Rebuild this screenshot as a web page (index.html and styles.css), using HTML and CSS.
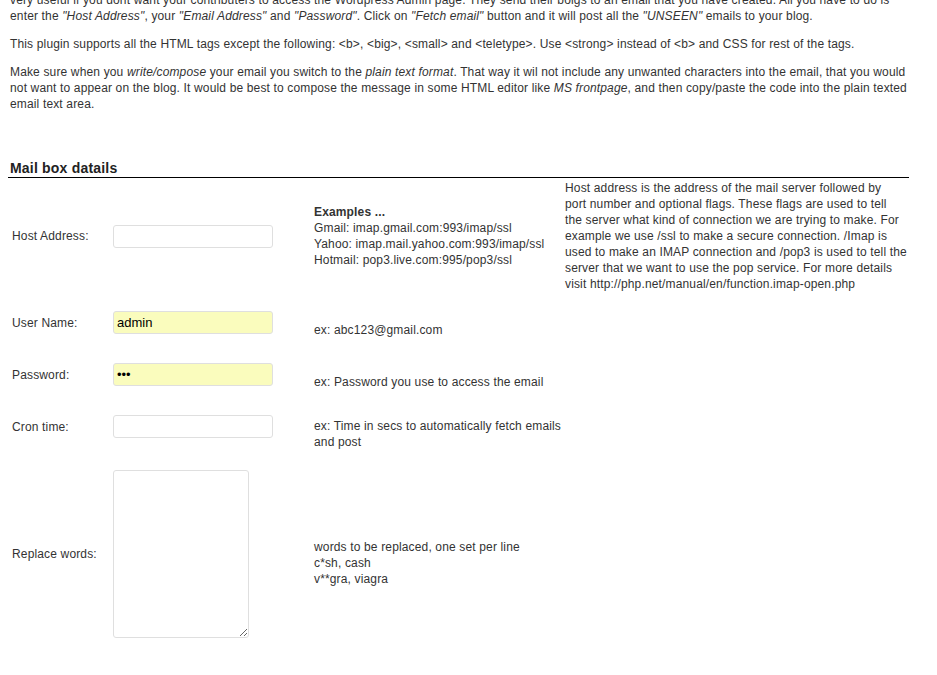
FILE: index.html
```html
<!DOCTYPE html>
<html>
<head>
<meta charset="utf-8">
<link rel="stylesheet" href="styles.css">
</head>
<body>
<div class="wrap">
  <div class="intro">
    <p class="first">very useful if you dont want your contributers to access the Wordpress Admin page. They send their bolgs to an email that you have created. All you have to do is enter the <em>"Host Address"</em>, your <em>"Email Address"</em> and <em>"Password"</em>. Click on <em>"Fetch email"</em> button and it will post all the <em>"UNSEEN"</em> emails to your blog.</p>
  </div>
  <p>This plugin supports all the HTML tags except the following: &lt;b&gt;, &lt;big&gt;, &lt;small&gt; and &lt;teletype&gt;. Use &lt;strong&gt; instead of &lt;b&gt; and CSS for rest of the tags.</p>
  <p>Make sure when you <em>write/compose</em> your email you switch to the <em>plain text format</em>. That way it wil not include any unwanted characters into the email, that you would not want to appear on the blog. It would be best to compose the message in some HTML editor like <em>MS frontpage</em>, and then copy/paste the code into the plain texted email text area.</p>

  <h3 class="section-title">Mail box datails</h3>

  <table class="form">
    <colgroup>
      <col class="c1"><col class="c2"><col class="c3"><col class="c4">
    </colgroup>
    <tr class="row-host">
      <td class="lbl">Host Address:</td>
      <td class="inp"><input type="text" class="field"></td>
      <td class="ex"><strong>Examples ...</strong><br>Gmail: imap.gmail.com:993/imap/ssl<br>Yahoo: imap.mail.yahoo.com:993/imap/ssl<br>Hotmail: pop3.live.com:995/pop3/ssl</td>
      <td class="desc">Host address is the address of the mail server followed by<br>port number and optional flags. These flags are used to tell<br>the server what kind of connection we are trying to make. For example we use /ssl to make a secure connection. /Imap is used to make an IMAP connection and /pop3 is used to tell the server that we want to use the pop service. For more details visit http://php.net/manual/en/function.imap-open.php</td>
    </tr>
    <tr class="row">
      <td class="lbl">User Name:</td>
      <td class="inp"><input type="text" class="field filled" value="admin"></td>
      <td class="ex">ex: abc123@gmail.com</td>
      <td class="desc"></td>
    </tr>
    <tr class="row">
      <td class="lbl">Password:</td>
      <td class="inp"><input type="password" class="field filled" value="abc"></td>
      <td class="ex">ex: Password you use to access the email</td>
      <td class="desc"></td>
    </tr>
    <tr class="row">
      <td class="lbl">Cron time:</td>
      <td class="inp"><input type="text" class="field"></td>
      <td class="ex">ex: Time in secs to automatically fetch emails and post</td>
      <td class="desc"></td>
    </tr>
    <tr class="row row-area">
      <td class="lbl">Replace words:</td>
      <td class="inp"><textarea class="area"></textarea></td>
      <td class="ex">words to be replaced, one set per line<br>c*sh, cash<br>v**gra, viagra</td>
      <td class="desc"></td>
    </tr>
  </table>
</div>
</body>
</html>
```

FILE: styles.css
```css
html, body {
  background: #fff;
}
body {
  margin: 0 8px 8px 8px;
  font-family: "Liberation Sans", Arial, sans-serif;
  font-size: 12px;
  line-height: 16px;
  letter-spacing: 0.15px;
  color: #333;
}
.wrap {
  width: 901px;
}
.intro {
  height: 24px;
  overflow: hidden;
  display: flex;
  flex-direction: column;
  justify-content: flex-end;
}
p {
  margin: 12px 2px;
}
p.first {
  margin: 0 2px;
  flex: none;
}
em {
  font-style: italic;
}
.section-title {
  margin: 48px 0 0 0;
  padding: 0 0 1px 2px;
  font-size: 14px;
  line-height: 16px;
  font-weight: bold;
  letter-spacing: 0.2px;
  color: #222;
  border-bottom: 1px solid #000;
}
.form {
  margin-left: 2px;
  border-collapse: collapse;
  border-spacing: 0;
  table-layout: fixed;
  width: 899px;
}
.c1 { width: 101px; }
.c2 { width: 201px; }
.c3 { width: 251px; }
.c4 { width: 346px; }
.form td {
  padding: 7px 0 7px 2px;
  vertical-align: middle;
}
.form .row-host td {
  padding-top: 2px;
  padding-bottom: 12px;
}
.form .row td.lbl,
.form .row td.inp {
  padding-bottom: 22px;
}
.form .row-area td {
  padding-top: 10px;
}
.form .row-area td.ex {
  padding-top: 13px;
}
.field {
  display: block;
  box-sizing: border-box;
  width: 160px;
  height: 23px;
  margin: 0;
  padding: 0 3px;
  border: 1px solid #dfdfdf;
  border-radius: 3px;
  background: #fff;
  font-family: "Liberation Sans", Arial, sans-serif;
  font-size: 13px;
  color: #000;
  outline: none;
}
.field.filled {
  background: #fafcbd;
}
.area {
  display: block;
  box-sizing: border-box;
  width: 136px;
  height: 168px;
  margin: 0;
  padding: 2px;
  border: 1px solid #dfdfdf;
  border-radius: 3px;
  background: #fff;
  font-family: "Liberation Sans", Arial, sans-serif;
  font-size: 12px;
  resize: both;
}
```
